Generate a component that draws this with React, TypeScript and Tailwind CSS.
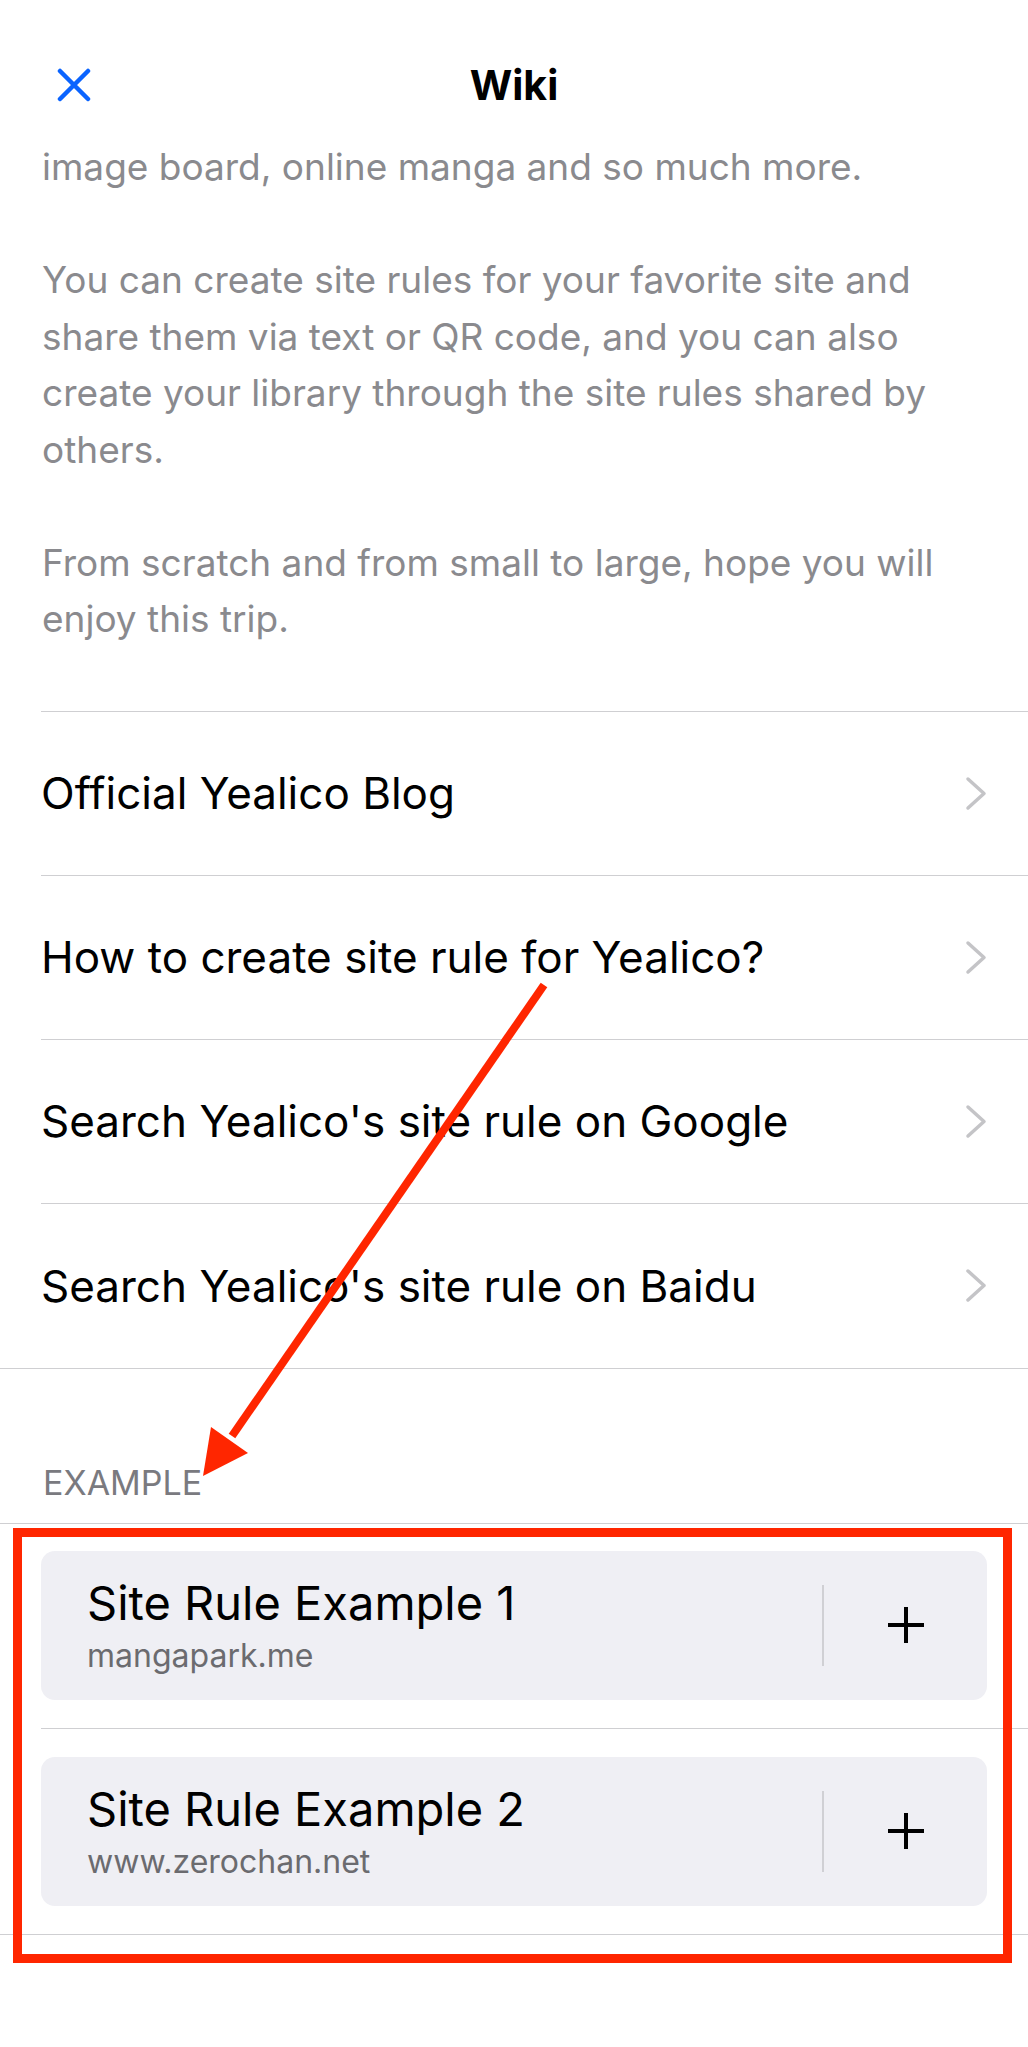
import React from 'react';

const links = [
  'Official Yealico Blog',
  'How to create site rule for Yealico?',
  "Search Yealico's site rule on Google",
  "Search Yealico's site rule on Baidu",
];

const examples = [
  { title: 'Site Rule Example 1', host: 'mangapark.me' },
  { title: 'Site Rule Example 2', host: 'www.zerochan.net' },
];

const Chevron = () => (
  <svg width="22" height="35" viewBox="0 0 22 35" fill="none">
    <path d="M3 3 L19 17.5 L3 32" stroke="#c4c4c7" strokeWidth="3.5" strokeLinecap="round" strokeLinejoin="round" />
  </svg>
);

const Plus = () => (
  <svg width="40" height="40" viewBox="0 0 40 40" fill="none">
    <path d="M20 2 V38 M2 20 H38" stroke="#000" strokeWidth="4" />
  </svg>
);

const App: React.FC = () => {
  return (
    <div className="relative min-h-[2047px] w-full bg-white text-black" style={{ fontFamily: 'Inter, "Noto Sans", sans-serif' }}>
      {/* Nav bar */}
      <div className="h-[139px] pt-[51px]">
        <div className="relative flex h-[68px] items-center justify-center">
          <button className="absolute left-[57px] top-[17px]">
            <svg width="34" height="34" viewBox="0 0 34 34" fill="none">
              <path d="M3 3 L31 31 M31 3 L3 31" stroke="#0a64ff" strokeWidth="4.5" strokeLinecap="round" />
            </svg>
          </button>
          <h1 className="text-[41px] font-bold leading-none">Wiki</h1>
        </div>
      </div>

      {/* Intro text */}
      <div className="pl-[42px] text-[37px] leading-[56.5px] text-[#8a8a8e] whitespace-nowrap">
        image board, online manga and so much more.
        <br />
        <br />
        You can create site rules for your favorite site and
        <br />
        share them via text or QR code, and you can also
        <br />
        create your library through the site rules shared by
        <br />
        others.
        <br />
        <br />
        From scratch and from small to large, hope you will
        <br />
        enjoy this trip.
      </div>

      {/* Links */}
      <div className="mt-[63px] border-b border-[#cfcfd2]">
        <div className="ml-[41px] border-t border-[#cfcfd2]" />
        {links.map((label, i) => (
          <div
            key={label}
            className={`ml-[41px] flex h-[164px] items-center justify-between pr-[41px] ${i < links.length - 1 ? 'border-b border-[#cfcfd2]' : ''}`}
          >
            <span className="text-[44px]">{label}</span>
            <Chevron />
          </div>
        ))}
      </div>

      {/* Example header */}
      <div className="flex h-[154px] items-end pb-[20px] pl-[43px]">
        <span className="text-[34px] leading-[41px] text-[#7a7a7f]">EXAMPLE</span>
      </div>

      {/* Examples */}
      <div className="border-y border-[#cfcfd2]">
        {examples.map((ex, i) => (
          <div key={ex.title} className={i === 0 ? 'pt-[27px]' : ''}>
            <div className={i === 0 ? 'pb-[28px]' : 'py-[28px]'}>
              <div className="mx-[41px] flex h-[149px] items-center rounded-[14px] bg-[#efeff4]">
                <div className="flex flex-1 flex-col pl-[46px]">
                  <span className="text-[47px] leading-[56px]">{ex.title}</span>
                  <span className="mt-[5px] text-[32px] leading-[40px] text-[#6b6b6f]">{ex.host}</span>
                </div>
                <div className="h-[81px] w-[2px] bg-[#d0d0d4]" />
                <div className="flex w-[163px] items-center justify-center">
                  <Plus />
                </div>
              </div>
            </div>
            {i === 0 && <div className="ml-[41px] border-t border-[#cfcfd2]" />}
          </div>
        ))}
      </div>

      {/* Annotation overlay */}
      <div className="pointer-events-none absolute left-[13px] top-[1528px] h-[435px] w-[999px] border-[9px] border-[#ff2600]" />
      <svg className="pointer-events-none absolute left-0 top-0" width="1028" height="2047" viewBox="0 0 1028 2047" fill="none">
        <path d="M544 985 L232 1436" stroke="#ff2600" strokeWidth="8" />
        <polygon points="203,1476 211,1427 248,1453" fill="#ff2600" />
      </svg>
    </div>
  );
};

export default App;
